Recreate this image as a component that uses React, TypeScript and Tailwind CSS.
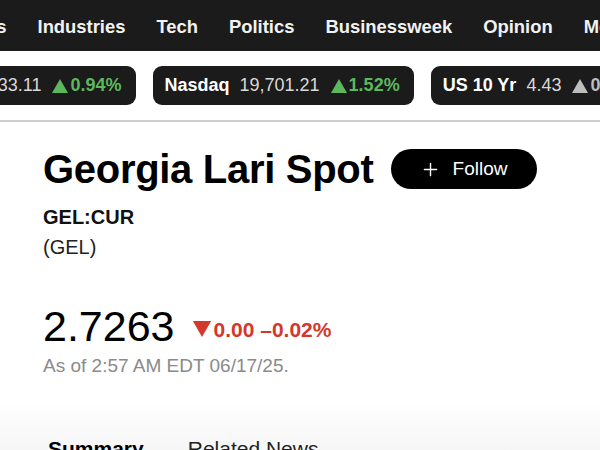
import { Plus } from "lucide-react";

const navItems = ["Markets", "Industries", "Tech", "Politics", "Businessweek", "Opinion", "More"];

const Triangle = ({ down, className }: { down?: boolean; className?: string }) => (
  <svg viewBox="0 0 16 14" className={className} fill="currentColor">
    {down ? <path d="M0 0h16L8 14z" /> : <path d="M8 0l8 14H0z" />}
  </svg>
);

interface TickerProps {
  name: string;
  value: string;
  change: string;
  muted?: boolean;
  className?: string;
}

const Ticker = ({ name, value, change, muted, className }: TickerProps) => {
  return (
    <div
      className={`flex h-[39px] shrink-0 items-center gap-[10px] whitespace-nowrap rounded-[9px] bg-[#1b1b1b] pl-[12px] pr-[14px] text-[18px] ${className ?? ""}`}
    >
      <span className="font-bold text-white">{name}</span>
      <span className="text-[#d9d9d9]">{value}</span>
      <span className={`ml-[1px] flex items-center gap-[2px] font-semibold ${muted ? "text-[#bdbdbd]" : "text-[#5cb85c]"}`}>
        <Triangle className="h-[14px] w-[16px]" />
        {change}
      </span>
    </div>
  );
};

export default function App() {
  return (
    <div className="h-[450px] w-[600px] overflow-hidden bg-white font-['Liberation_Sans',Arial,sans-serif]">
      <nav className="flex h-[51px] items-center overflow-hidden bg-[#1b1b1b] pt-[3px]">
        <ul className="-ml-[63px] flex shrink-0 gap-[31px] whitespace-nowrap text-[18.4px] font-semibold text-[#f2f2f2]">
          {navItems.map((item) => (
            <li key={item}>{item}</li>
          ))}
        </ul>
      </nav>

      <div className="flex h-[71px] items-center gap-[17px] overflow-hidden border-b-2 border-[#cfcfcf]">
        <Ticker name="S&P 500" value="6,033.11" change="0.94%" className="-ml-[121px]" />
        <Ticker name="Nasdaq" value="19,701.21" change="1.52%" />
        <Ticker name="US 10 Yr" value="4.43" change="0.02%" muted />
      </div>

      <main className="px-[43px]">
        <div className="mt-[23px] flex items-center gap-[17px]">
          <h1 className="text-[40px] font-bold leading-[48px] tracking-[-0.3px] text-black">Georgia Lari Spot</h1>
          <button className="flex h-[40px] w-[146px] items-center justify-center gap-[12px] rounded-full bg-black text-[19px] text-white">
            <Plus size={21} strokeWidth={1.6} />
            Follow
          </button>
        </div>

        <div className="mt-[9px] text-[20px] font-semibold leading-[30px] text-[#111]">GEL:CUR</div>
        <div className="text-[20px] leading-[30px] text-[#222]">(GEL)</div>

        <div className="mt-[42px] flex items-end gap-[17px]">
          <span className="text-[43px] leading-[44px] text-black">2.7263</span>
          <span className="mb-[3px] flex items-center gap-[2px] text-[21px] font-semibold text-[#d4382c]">
            <Triangle down className="h-[16px] w-[20px]" />
            0.00 –0.02%
          </span>
        </div>
        <div className="mt-[4px] text-[19px] text-[#8a8a8a]">As of 2:57 AM EDT 06/17/25.</div>
      </main>

      <div className="mt-[22px] h-[80px] bg-gradient-to-b from-white to-[#efefef] pt-[30px]">
        <div className="flex gap-[44px] px-[48px] text-[21px]">
          <span className="font-bold text-black">Summary</span>
          <span className="text-[#222]">Related News</span>
        </div>
      </div>
    </div>
  );
}
